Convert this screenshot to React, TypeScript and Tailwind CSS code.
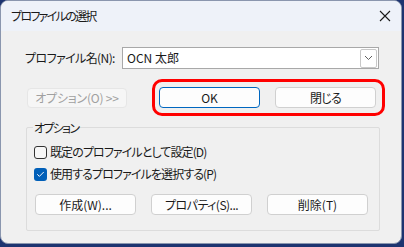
import { Check } from 'lucide-react';

const font = "font-['Noto_Sans_CJK_JP','Noto_Sans',sans-serif] [font-feature-settings:'palt']";

function Btn({ label, className = '' }: { label: string; className?: string }) {
  return (
    <button
      className={`h-[21px] w-[101px] rounded-[4px] border border-[#d0d0d0] bg-[#fdfdfd] text-[12px] leading-none text-[#1a1a1a] flex items-center justify-center ${className}`}
    >
      {label}
    </button>
  );
}

function CheckRow({ label, checked }: { label: string; checked?: boolean }) {
  return (
    <div className="flex h-[18px] items-center">
      {checked ? (
        <span className="flex h-[13px] w-[13px] items-center justify-center rounded-[3px] bg-[#005fb8]">
          <Check className="h-[9px] w-[9px] text-white" strokeWidth={2.5} />
        </span>
      ) : (
        <span className="h-[13px] w-[13px] rounded-[3px] border border-[#333333] bg-[#f7f7f7]" />
      )}
      <span className="ml-[3px] text-[12px] tracking-[-0.9px] text-[#1a1a1a]">{label}</span>
    </div>
  );
}

export default function App() {
  return (
    <div className={`h-[247px] w-[404px] bg-[#1d3470] ${font}`}>
      <div className="flex h-[244px] w-[402px] flex-col overflow-hidden rounded-[8px] border border-[#8a96ae] bg-[#f0f0f0]">
        {/* Title bar */}
        <div className="flex h-[30px] shrink-0 items-center justify-between bg-[#eef2f9] pl-[10px] pr-[9px]">
          <span className="text-[12px] tracking-[-1.7px] text-[#1a1a1a]">プロファイルの選択</span>
          <svg width="12" height="12" viewBox="0 0 12 12" className="mr-[1px]">
            <path d="M1 1L11 11M11 1L1 11" stroke="#1a1a1a" strokeWidth="1.1" />
          </svg>
        </div>

        {/* Profile name */}
        <div className="mt-[16px] flex items-center">
          <span className="ml-[24px] w-[97px] text-[12px] tracking-[-0.6px] text-[#1a1a1a]">プロファイル名(N):</span>
          <div className="flex h-[22px] w-[257px] items-center justify-between border border-[#a8a8a8] bg-white pl-[4px] pr-[1px]">
            <span className="text-[12px] text-[#1a1a1a]">OCN 太郎</span>
            <span className="flex h-[19px] w-[17px] items-center justify-center rounded-[2px] border border-[#c8c8c8] bg-white">
              <svg width="9" height="6" viewBox="0 0 9 6">
                <path d="M1 1L4.5 4.5L8 1" stroke="#606060" strokeWidth="1" fill="none" />
              </svg>
            </span>
          </div>
        </div>

        {/* Buttons row */}
        <div className="mt-[10px] flex items-center">
          <button className="ml-[26px] flex h-[20px] w-[100px] items-center justify-center rounded-[4px] border border-[#e6e6e6] bg-[#f6f6f6] text-[12px] leading-none tracking-[-0.2px] text-[#a0a0a0]">
            オプション(O) &gt;&gt;
          </button>
          <div className="ml-[25px] flex gap-[15px] rounded-[10px] border-[3px] border-[#ff0000] py-[5px] pl-[4px] pr-[6px]">
            <Btn label="OK" className="!border-[#0067c0]" />
            <Btn label="閉じる" className="tracking-[-0.8px]" />
          </div>
        </div>

        {/* Options group */}
        <div className="relative ml-[25px] mt-[11px] h-[104px] w-[354px] rounded-[2px] border border-[#dcdcdc] pl-[7px] pt-[15px]">
          <span className="absolute -top-[9px] left-[6px] bg-[#f0f0f0] px-[1px] text-[12px] tracking-[-1.7px] text-[#1a1a1a]">
            オプション
          </span>
          <CheckRow label="既定のプロファイルとして設定(D)" />
          <div className="mt-[4px]">
            <CheckRow label="使用するプロファイルを選択する(P)" checked />
          </div>
          <div className="ml-[1px] mt-[11px] flex gap-[15px]">
            <Btn label="作成(W)..." />
            <Btn label="プロパティ(S)..." className="tracking-[-0.5px]" />
            <Btn label="削除(T)" />
          </div>
        </div>
      </div>
    </div>
  );
}
